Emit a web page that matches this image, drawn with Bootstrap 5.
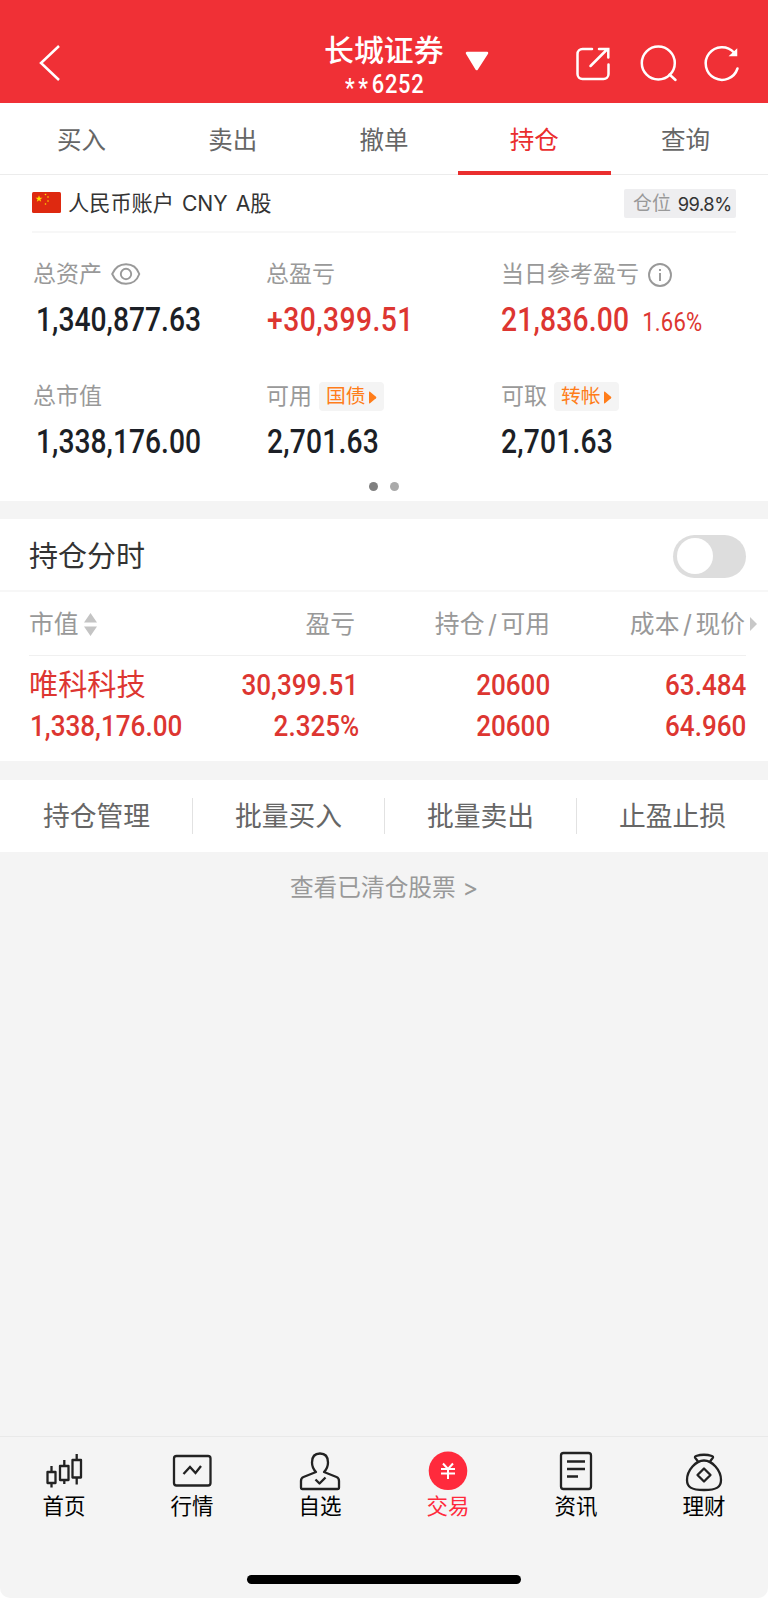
<!DOCTYPE html>
<html lang="zh-CN">
<head>
<meta charset="utf-8">
<meta name="viewport" content="width=device-width, initial-scale=1">
<title>持仓</title>
<link href="https://cdn.jsdelivr.net/npm/bootstrap@5.3.0/dist/css/bootstrap.min.css" rel="stylesheet">
<style>
body{font-family:Inter,"Noto Sans CJK SC",sans-serif;font-weight:400;color:#333;background:#fff;line-height:1}
.phone{width:768px;height:1598px;background:#f4f4f4;border-radius:0 0 10px 10px;overflow:hidden}
svg{display:block;flex:none;overflow:visible}
.ln{white-space:nowrap}
.topbar{height:103px;background:#f03036;color:#fff;display:grid;grid-template-columns:324px 119px 1fr;padding-top:20px}
.acct-name{font-size:29.9px;line-height:30px;font-weight:500;margin-top:15px}
.din{font-family:Roboto,"Noto Sans CJK SC",sans-serif;font-weight:500;display:inline-block;transform:scaleX(.875);transform-origin:0 50%;white-space:nowrap}
.din-r{transform-origin:100% 50%}
.acct-no{font-size:25px;line-height:24px;margin:8px 0 0 21px;letter-spacing:.8px}
.acct-no span{letter-spacing:4.2px;position:relative;top:4px}
.tabs{height:72px;border-bottom:1px solid #ececec;padding:0 8px 0 5px}
.tabs a{flex:1;font-size:24.5px;text-align:center;line-height:74px;height:72px;position:relative;padding-left:2px}
.tabs a:not([href]){color:#666}
.tabs a.on:not([href]){color:#ea2e2e;text-decoration:none;padding-left:1px}
.tabs a.on::after{content:"";position:absolute;left:-1px;right:-2px;bottom:0;height:4px;background:#ea2e2e}
.acct{height:58px;margin:0 32px;border-bottom:2px solid #f7f7f7;font-size:21.2px;word-spacing:2px}
.pos{width:112px;height:29px;background:#eeeef0;border-radius:2px;font-size:18.9px;color:#999;padding-left:9px;padding-top:2px}
.pos b{font-weight:400;color:#333;font-size:18.3px;letter-spacing:-.5px;margin-left:7px}
.sumgrid{display:grid;grid-template-columns:233px 234px 1fr;padding-left:33px;height:122px}
.lab{font-size:23px;color:#999;height:30px;padding-top:1px}
.val{font-size:32.3px;line-height:38px;color:#1c1f26;margin-top:12px}
.red{color:#dd3631}
.pill{width:65px;height:29px;background:#f4f4f4;border-radius:4px;color:#ff7d1a;font-size:19.8px;padding-left:7px;padding-top:1px}
.dot{width:9px;height:9px;border-radius:50%;background:#aaa}
.holdhead{height:73px;padding:3px 22px 0 29px;border-bottom:2px solid #f7f7f7;font-size:29px}
.toggle{width:73px;height:43px;border-radius:22px;background:#ddd;padding:3.5px}
.toggle i{display:block;width:36px;height:36px;border-radius:50%;background:#fff}
.cols{display:grid;grid-template-columns:129px 200px 192px 196px;margin:0 22px 0 29px}
.cols>*{text-align:right;white-space:nowrap}
.cols>:first-child{text-align:left}
.colhead{height:64px;border-bottom:1px solid #f0f0f0;font-size:24.8px;color:#999;line-height:64px}
.colhead span span{margin:0 3.5px}
.cell{font-size:29.3px;line-height:42px}
.cell .din{transform:scaleX(.89)}
.acts{height:72px;font-size:26.8px;color:#666;padding-left:1px}
.acts div{flex:1;text-align:center;line-height:36px}
.acts div+div{border-left:1px solid #e2e2e2}
.nav-b{height:162px;border-top:1px solid #e9e9e9}
.nav-b a{flex:1;font-size:21.5px;padding-top:14px;text-align:center}
.nav-b a:not([href]){color:#000}
.nav-b svg{margin:0 auto 5px}
.nav-b a.on:not([href]){color:#ff2a3c;text-decoration:none}
.homebar{width:274px;height:9px;border-radius:5px;background:#000}
</style>
</head>
<body>
<div class="phone d-flex flex-column">
  <header class="topbar">
    <div><svg width="60" height="60" style="margin-left:20px;margin-top:12px" viewBox="20 32 60 60" fill="none" stroke="#fff" stroke-width="2.5"><path d="M59 46 41 63 59 80"/></svg></div>
    <div>
      <div class="acct-name ln">长城证券</div>
      <div class="din acct-no"><span>**</span>6252</div>
    </div>
    <svg width="325" height="83" viewBox="443 20 325 83" fill="none" stroke="#fff" stroke-width="2.5" stroke-linecap="round">
      <path d="M467 53h20L476.700 69z" fill="#fff" stroke-linejoin="round"/>
      <path d="M592 49h-9.500a5 5 0 0 0-5 5v20a5 5 0 0 0 5 5h21a5 5 0 0 0 5-5V64.500M590.500 66l16-16M599 49h9.300v8.500"/>
      <circle cx="658.300" cy="63" r="16.500"/><path d="m669.500 74.500 6 5.500"/>
      <path d="M737.500 68.500A16.300 16.300 0 1 1 734 52.500"/><path d="M736.500 50v5.500h-6z" fill="#fff" stroke-width="1.500"/>
    </svg>
  </header>

  <nav class="tabs d-flex bg-white">
    <a>买入</a><a>卖出</a><a>撤单</a><a class="on">持仓</a><a>查询</a>
  </nav>

  <section class="bg-white" style="height:326px">
    <div class="acct d-flex align-items-center justify-content-between">
      <div class="d-flex align-items-center ln">
        <svg width="29" height="21" viewBox="0 0 29 21" class="me-2"><rect width="29" height="21" rx="1.500" fill="#de2910"/><g fill="#ffde00"><path d="m7 3.200.9 2.500h2.600L8.400 7.300l.8 2.500L7 8.300 4.800 9.800l.8-2.500-2.100-1.600h2.600z"/><circle cx="13.500" cy="2.500" r=".8"/><circle cx="16" cy="5" r=".8"/><circle cx="16" cy="9" r=".8"/><circle cx="13.500" cy="12" r=".8"/></g></svg>
        <span style="margin-left:-1px;padding-top:2px">人民币账户 CNY A股</span>
      </div>
      <div class="pos d-flex align-items-center ln">仓位<b>99.8%</b></div>
    </div>
    <div class="sumgrid" style="padding-top:26px">
      <div>
        <div class="lab d-flex align-items-center ln">总资产<svg class="ms-2" width="30" height="22" viewBox="0 0 30 22" fill="none" stroke="#999" stroke-width="1.900" style="position:relative;left:1px;top:-1px"><path d="M1.200 11C4 4.500 9 1.200 15 1.200S26 4.500 28.300 11C26 17.500 21 20.800 15 20.800S4 17.500 1.200 11z"/><circle cx="15" cy="11" r="5.200"/></svg></div>
        <div class="din val" style="margin-left:3px">1,340,877.63</div>
      </div>
      <div>
        <div class="lab d-flex align-items-center ln">总盈亏</div>
        <div class="din val red" style="letter-spacing:.5px;margin-left:1px">+30,399.51</div>
      </div>
      <div>
        <div class="lab d-flex align-items-center ln" style="padding-left:1px">当日参考盈亏<svg style="margin-left:9px" width="24" height="24" viewBox="0 0 24 24" fill="none" stroke="#999" stroke-width="1.900"><circle cx="12" cy="12" r="11"/><path d="M12 10v8M12 6v2"/></svg></div>
        <div class="din val red" style="margin-left:1px;letter-spacing:.2px">21,836.00<span style="font-size:25.200px;margin-left:15px;font-weight:400">1.66%</span></div>
      </div>
    </div>
    <div class="sumgrid" style="padding-top:26px;height:118px">
      <div>
        <div class="lab d-flex align-items-center ln">总市值</div>
        <div class="din val" style="margin-left:3px">1,338,176.00</div>
      </div>
      <div>
        <div class="lab d-flex align-items-center ln">可用<span class="pill d-flex align-items-center" style="margin-left:7px">国债<svg width="8" height="13" viewBox="0 0 8 13" style="margin-left:3px"><path d="M0 1.200Q0 0 1 .8L7 5.800q.8.700 0 1.400L1 12.200Q0 13 0 11.800z" fill="#ff7d1a"/></svg></span></div>
        <div class="din val" style="letter-spacing:.2px;margin-left:1px">2,701.63</div>
      </div>
      <div>
        <div class="lab d-flex align-items-center ln" style="padding-left:1px">可取<span class="pill d-flex align-items-center" style="margin-left:7px">转帐<svg width="8" height="13" viewBox="0 0 8 13" style="margin-left:3px"><path d="M0 1.200Q0 0 1 .8L7 5.800q.8.700 0 1.400L1 12.200Q0 13 0 11.800z" fill="#ff7d1a"/></svg></span></div>
        <div class="din val" style="letter-spacing:.2px;margin-left:1px">2,701.63</div>
      </div>
    </div>
    <div class="d-flex justify-content-center" style="gap:12.500px;padding-top:9px"><i class="dot" style="background:#808080"></i><i class="dot"></i></div>
  </section>

  <section class="bg-white" style="margin-top:18px;height:242px">
    <div class="holdhead d-flex align-items-center justify-content-between"><span>持仓分时</span><div class="toggle"><i></i></div></div>
    <div class="cols colhead">
      <div class="d-flex align-items-center">市值<svg width="13" height="23" viewBox="0 0 13 23" style="margin-left:5px" fill="#c4c4c4"><path d="M6.500 0 13 9.500H0zM0 13.500h13L6.500 23z"/></svg></div>
      <div style="padding-right:3px">盈亏</div>
      <div><span>持仓<span>/</span>可用</span></div>
      <div class="position-relative" style="left:-1px"><span>成本<span>/</span>现价</span><svg class="position-absolute" style="left:201px;top:25px" width="7" height="14"><path d="M0 0 7 7 0 14z" fill="#c8c8c8"/></svg></div>
    </div>
    <div class="cols cell red" style="margin-top:8px">
      <div style="font-size:29.200px">唯科科技</div>
      <div><span class="din din-r">30,399.51</span></div>
      <div><span class="din din-r">20600</span></div>
      <div><span class="din din-r">63.484</span></div>
    </div>
    <div class="cols cell red" style="position:relative;top:-1px">
      <div><span class="din" style="margin-left:1px">1,338,176.00</span></div>
      <div><span class="din din-r" style="margin-right:-1px">2.325%</span></div>
      <div><span class="din din-r">20600</span></div>
      <div><span class="din din-r">64.960</span></div>
    </div>
  </section>

  <section class="acts bg-white d-flex align-items-center" style="margin-top:19px">
    <div>持仓管理</div><div>批量买入</div><div>批量卖出</div><div>止盈止损</div>
  </section>
  <div class="text-center" style="font-size:23.700px;color:#999;margin-top:23px;line-height:26px">查看已清仓股票 &gt;</div>

  <footer class="mt-auto nav-b">
    <nav class="d-flex">
      <a><svg width="40" height="40" viewBox="44 1451 40 40" fill="none" stroke="#222" stroke-width="2.300" stroke-linejoin="round"><path d="M47.500 1472h8v11h-8zM51.500 1466v6M51.500 1483v4.500M60 1466h8.500v14H60zM64.300 1460v6M64.300 1480v4M72.500 1460H81v17.500h-8.500zM76.700 1454v6M76.700 1477.500v7"/></svg>首页</a>
      <a><svg width="40" height="40" viewBox="172 1451 40 40" fill="none" stroke="#222" stroke-width="2.300"><rect x="174" y="1456" width="36.500" height="29.500" rx="2.500"/><path d="m183.500 1474 6.500-7 5.500 6 5.500-7"/></svg>行情</a>
      <a><svg width="40" height="40" viewBox="300 1451 40 40" fill="none" stroke="#222" stroke-width="2.300" stroke-linejoin="round"><path d="M316 1472c-3-3-4-6-4-9.500 0-6 3-9 8-9s8 3 8 9c0 3.500-1 6.500-4 9.500l12.500 5c2 .8 2.500 2 2.500 4v6.500q0 1.500-1.500 1.500h-35q-1.500 0-1.500-1.500V1481c0-2 .5-3.200 2.500-4z"/><path d="m315.500 1479.500 4 4 6-6"/></svg>自选</a>
      <a class="on"><svg width="40" height="40" viewBox="428 1451 40 40"><circle cx="448" cy="1470.800" r="19.300" fill="#ff2a3c"/><path d="m443 1463.500 5 5.500 5-5.500M448 1469v10M441 1469h14M441 1473.500h14" fill="none" stroke="#fff" stroke-width="2"/></svg>交易</a>
      <a><svg width="40" height="40" viewBox="556 1451 40 40" fill="none" stroke="#222" stroke-width="2.300"><rect x="561" y="1453" width="30" height="36" rx="2.500"/><path d="M567 1461.500h18M567 1469h18M567 1476.500h11"/></svg>资讯</a>
      <a><svg width="40" height="40" viewBox="684 1451 40 40" fill="none" stroke="#222" stroke-width="2.300" stroke-linejoin="round"><path d="M698 1462c-1-3-5-5-2-6q8-2.500 16 0c3 1-1 3-2 6"/><path d="M704 1460.500c8 0 17 9.500 17 19.500 0 7-4 10-17 10s-17-3-17-10c0-10 9-19.500 17-19.500zM704 1468.500l6.500 6.500-6.500 6.500-6.500-6.500z"/></svg>理财</a>
    </nav>
    <div class="homebar mx-auto" style="margin-top:57px"></div>
  </footer>
</div>
<script src="https://cdn.jsdelivr.net/npm/bootstrap@5.3.0/dist/js/bootstrap.bundle.min.js"></script>
</body>
</html>
